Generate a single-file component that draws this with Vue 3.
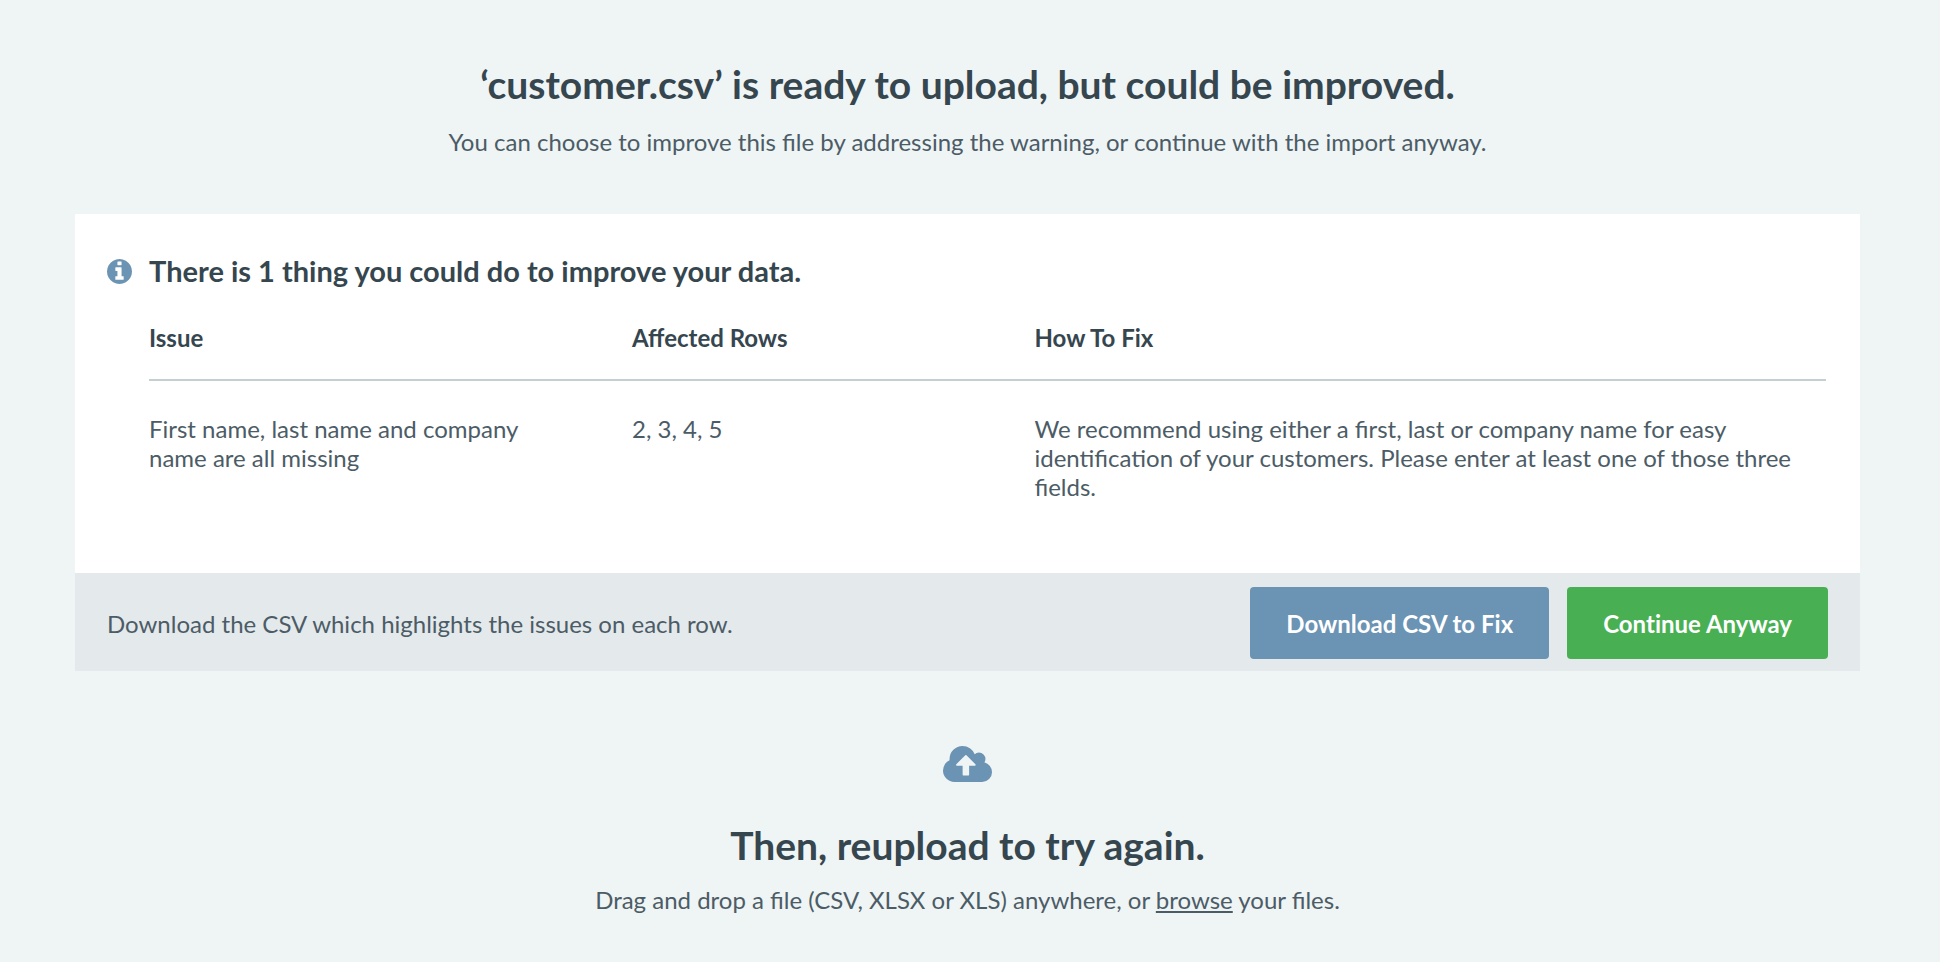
<script setup>
const issues = [
  {
    issue: 'First name, last name and company name are all missing',
    rows: [2, 3, 4, 5],
    fix: 'We recommend using either a first, last or company name for easy identification of your customers. Please enter at least one of those three fields.',
  },
]
</script>

<template>
  <main class="page">
    <header class="intro">
      <h1 class="title">‘customer.csv’ is ready to upload, but could be improved.</h1>
      <p class="lead">You can choose to improve this file by addressing the warning, or continue with the import anyway.</p>
    </header>

    <section class="card">
      <div class="card-body">
        <svg class="info-icon" viewBox="128 128 1536 1536" aria-hidden="true">
          <path d="M1152 1376v-160q0-14-9-23t-23-9h-96v-512q0-14-9-23t-23-9h-320q-14 0-23 9t-9 23v160q0 14 9 23t23 9h96v320h-96q-14 0-23 9t-9 23v160q0 14 9 23t23 9h448q14 0 23-9t9-23zM1024 480v-160q0-14-9-23t-23-9h-192q-14 0-23 9t-9 23v160q0 14 9 23t23 9h192q14 0 23-9t9-23zM1664 896q0 209-103 385.5t-279.5 279.5-385.5 103-385.5-103-279.5-279.5-103-385.5 103-385.5 279.5-279.5 385.5-103 385.5 103 279.5 279.5 103 385.5z" />
        </svg>
        <div class="details">
          <h2 class="card-title">There is {{ issues.length }} thing you could do to improve your data.</h2>
          <table class="issues">
            <thead>
              <tr>
                <th class="col-issue" scope="col">Issue</th>
                <th class="col-rows" scope="col">Affected Rows</th>
                <th scope="col">How To Fix</th>
              </tr>
            </thead>
            <tbody>
              <tr v-for="item in issues" :key="item.issue">
                <td>{{ item.issue }}</td>
                <td>{{ item.rows.join(', ') }}</td>
                <td>{{ item.fix }}</td>
              </tr>
            </tbody>
          </table>
        </div>
      </div>
      <footer class="card-footer">
        <p class="hint">Download the CSV which highlights the issues on each row.</p>
        <div class="actions">
          <button class="button download" type="button">Download CSV to Fix</button>
          <button class="button continue" type="button">Continue Anyway</button>
        </div>
      </footer>
    </section>

    <section class="reupload">
      <svg class="cloud-icon" viewBox="0 128 1920 1408" aria-hidden="true">
        <path d="M1280 864q0-14-9-23l-352-352q-9-9-23-9t-23 9l-351 351q-10 12-10 24 0 14 9 23t23 9h224v352q0 13 9.500 22.500t22.500 9.500h192q13 0 22.500-9.500t9.500-22.500v-352h224q13 0 22.500-9.500t9.500-22.500zM1920 1152q0 159-112.500 271.500t-271.500 112.500h-1088q-185 0-316.500-131.500t-131.500-316.500q0-130 70-240t188-165q-2-30-2-43 0-212 150-362t362-150q156 0 285.500 87t188.500 231q71-62 166-62 106 0 181 75t75 181q0 76-41 138 130 31 213.500 135.500t83.500 238.500z" />
      </svg>
      <h2 class="title">Then, reupload to try again.</h2>
      <p class="lead">Drag and drop a file (CSV, XLSX or XLS) anywhere, or <a class="browse" href="#">browse</a> your files.</p>
    </section>
  </main>
</template>

<style>
body {
  margin: 0;
  background: #eff4f5;
}
</style>

<style scoped>
.page {
  padding: 60px 80px 48px 75px;
  font-family: Lato, "Open Sans", sans-serif;
  font-size: 24px;
  line-height: 29px;
  color: #4c5c66;
}
h1,
h2,
p {
  margin: 0;
}
.intro,
.reupload {
  text-align: center;
}
.title {
  font-size: 39px;
  line-height: 48px;
  font-weight: 700;
  color: #36464f;
}
.intro .lead {
  margin-top: 19px;
}
.reupload .lead {
  margin-top: 16px;
}
.card {
  margin-top: 58px;
  background: #fff;
}
.card-body {
  display: flex;
  align-items: flex-start;
  gap: 17px;
  padding: 39px 34px 72px 32px;
}
.info-icon {
  flex: none;
  width: 25px;
  height: 25px;
  margin-top: 6px;
  fill: #6b93b3;
}
.details {
  flex: 1;
}
.card-title {
  font-size: 29px;
  line-height: 36px;
  font-weight: 700;
  color: #36464f;
}
.issues {
  width: 100%;
  margin-top: 34px;
  table-layout: fixed;
  border-collapse: separate;
  border-spacing: 0;
  text-align: left;
}
th,
td {
  box-sizing: border-box;
}
th {
  padding: 0 0 27px;
  border-bottom: 2px solid #c3cfd3;
  font-weight: 700;
  color: #36464f;
}
td {
  padding: 33px 0 0;
  vertical-align: top;
}
th:not(:last-child),
td:not(:last-child) {
  padding-right: 72px;
}
.col-issue {
  width: 28.8%;
}
.col-rows {
  width: 24%;
}
.card-footer {
  display: flex;
  align-items: center;
  justify-content: space-between;
  padding: 14px 32px 12px;
  background: #e4e9ec;
}
.actions {
  display: flex;
  gap: 18px;
}
.button {
  height: 72px;
  padding: 0 36px;
  border: 0;
  border-radius: 4px;
  font: inherit;
  font-weight: 700;
  font-variant-ligatures: no-common-ligatures;
  color: #fff;
  cursor: pointer;
}
.download {
  background: #6b93b3;
}
.continue {
  background: #48b052;
}
.reupload {
  margin-top: 75px;
}
.cloud-icon {
  display: block;
  width: 49px;
  height: 36px;
  margin: 0 auto 39px;
  fill: #6b93b3;
}
.browse {
  color: inherit;
}
</style>
